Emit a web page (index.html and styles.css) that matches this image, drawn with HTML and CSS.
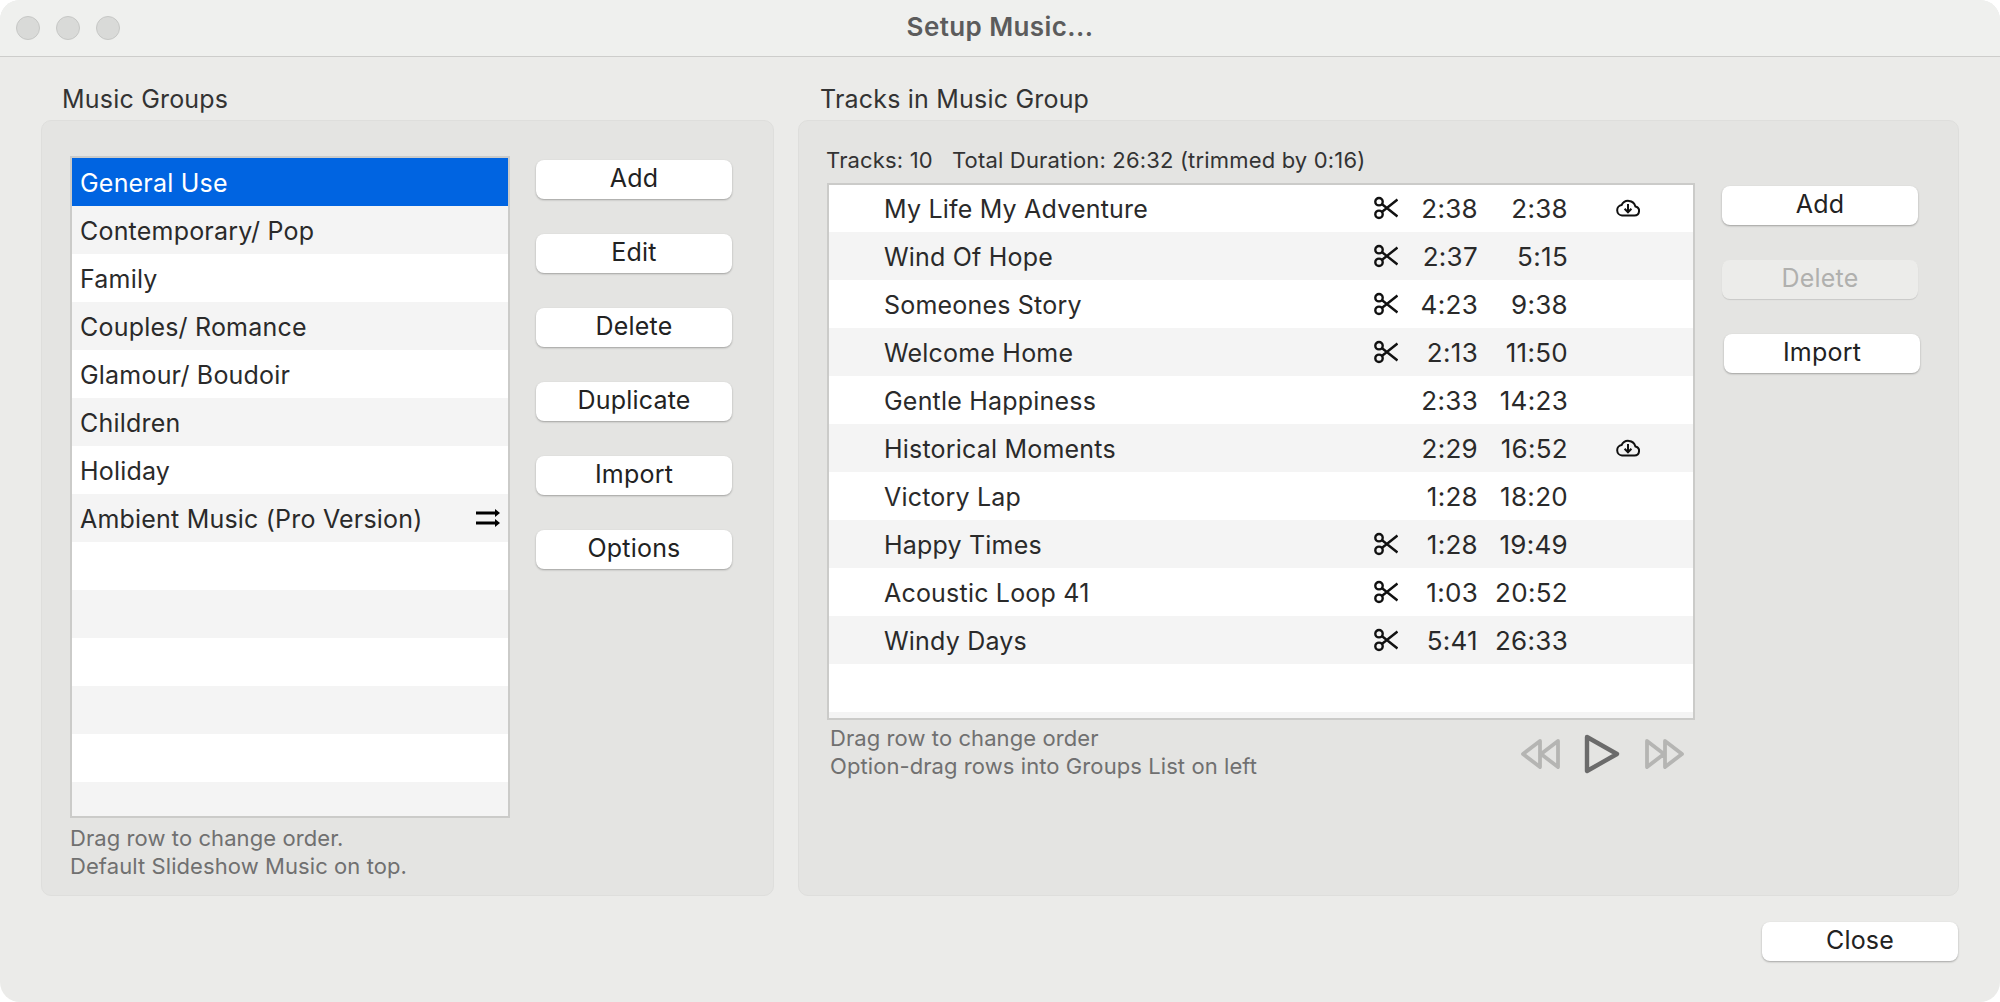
FILE: index.html
```html
<!doctype html>
<html lang="en">
<head>
	<meta charset="UTF-8">
	<title>Setup Music...</title>
	<link rel="stylesheet" href="styles.css">
</head>
<body>
<div class="window">
	<div class="titlebar">
		<div class="lights"><span></span><span></span><span></span></div>
		<div class="title">Setup Music...</div>
	</div>
	<div class="main">
		<section class="group group-left">
			<h2>Music Groups</h2>
			<div class="panel panel-left">
				<div class="list-col">
					<div class="list list-groups">
						<div class="row selected">General Use</div>
						<div class="row">Contemporary/ Pop</div>
						<div class="row">Family</div>
						<div class="row">Couples/ Romance</div>
						<div class="row">Glamour/ Boudoir</div>
						<div class="row">Children</div>
						<div class="row">Holiday</div>
						<div class="row">Ambient Music (Pro Version)
							<svg class="shuffle" viewBox="0 0 24 18"><path d="M0 4h20M0 14h20" stroke="#000" stroke-width="3"/><path d="M19 0l5 4-5 4zM19 10l5 4-5 4z" fill="#000"/></svg>
						</div>
						<div class="row"></div>
						<div class="row"></div>
						<div class="row"></div>
						<div class="row"></div>
						<div class="row"></div>
						<div class="row"></div>
					</div>
					<p class="hint">Drag row to change order.<br>Default Slideshow Music on top.</p>
				</div>
				<div class="buttons buttons-left">
					<button>Add</button>
					<button>Edit</button>
					<button>Delete</button>
					<button>Duplicate</button>
					<button>Import</button>
					<button>Options</button>
				</div>
			</div>
		</section>
		<section class="group group-right">
			<h2>Tracks in Music Group</h2>
			<div class="panel panel-right">
				<div class="tracks-col">
					<div class="summary">Tracks: 10 &nbsp; Total Duration: 26:32 (trimmed by 0:16)</div>
					<div class="list list-tracks">
						<div class="row track"><span class="name">My Life My Adventure</span><svg class="cut" viewBox="0 0 24 24"><use href="#scissors"/></svg><span class="time">2:38</span><span class="total">2:38</span><svg class="cloud" viewBox="0 0 24 18"><use href="#cloud"/></svg></div>
						<div class="row track"><span class="name">Wind Of Hope</span><svg class="cut" viewBox="0 0 24 24"><use href="#scissors"/></svg><span class="time">2:37</span><span class="total">5:15</span></div>
						<div class="row track"><span class="name">Someones Story</span><svg class="cut" viewBox="0 0 24 24"><use href="#scissors"/></svg><span class="time">4:23</span><span class="total">9:38</span></div>
						<div class="row track"><span class="name">Welcome Home</span><svg class="cut" viewBox="0 0 24 24"><use href="#scissors"/></svg><span class="time">2:13</span><span class="total">11:50</span></div>
						<div class="row track"><span class="name">Gentle Happiness</span><i class="cut"></i><span class="time">2:33</span><span class="total">14:23</span></div>
						<div class="row track"><span class="name">Historical Moments</span><i class="cut"></i><span class="time">2:29</span><span class="total">16:52</span><svg class="cloud" viewBox="0 0 24 18"><use href="#cloud"/></svg></div>
						<div class="row track"><span class="name">Victory Lap</span><i class="cut"></i><span class="time">1:28</span><span class="total">18:20</span></div>
						<div class="row track"><span class="name">Happy Times</span><svg class="cut" viewBox="0 0 24 24"><use href="#scissors"/></svg><span class="time">1:28</span><span class="total">19:49</span></div>
						<div class="row track"><span class="name">Acoustic Loop 41</span><svg class="cut" viewBox="0 0 24 24"><use href="#scissors"/></svg><span class="time">1:03</span><span class="total">20:52</span></div>
						<div class="row track"><span class="name">Windy Days</span><svg class="cut" viewBox="0 0 24 24"><use href="#scissors"/></svg><span class="time">5:41</span><span class="total">26:33</span></div>
						<div class="row"></div>
						<div class="row"></div>
					</div>
					<div class="below">
						<p class="hint">Drag row to change order<br>Option-drag rows into Groups List on left</p>
						<div class="transport">
							<svg class="skip" viewBox="0 0 40 32"><path d="M20 3L3 16l17 13zM38 3L21 16l17 13z" /></svg>
							<svg class="play" viewBox="0 0 36 40"><path d="M3 3L33 20 3 37z"/></svg>
							<svg class="skip last" viewBox="0 0 40 32"><path d="M2 3l17 13L2 29zM20 3l17 13-17 13z"/></svg>
						</div>
					</div>
				</div>
				<div class="buttons buttons-right">
					<button>Add</button>
					<button class="disabled">Delete</button>
					<button class="shifted">Import</button>
				</div>
			</div>
		</section>
	</div>
	<div class="footer"><button>Close</button></div>
</div>
<svg class="defs" width="0" height="0">
	<defs>
		<g id="scissors" fill="none" stroke="#111" stroke-width="2.4">
			<circle cx="5" cy="5.7" r="3.7"/>
			<circle cx="5" cy="18.3" r="3.7"/>
			<path d="M7.8 8L23.5 20.5M7.8 16L23.5 3.5"/>
		</g>
		<g id="cloud" fill="none" stroke="#111" stroke-width="2">
			<path d="M6 16.5H18.5a4.6 4.6 0 0 0 .9-9.1A7.4 7.4 0 0 0 5.6 6 5.3 5.3 0 0 0 6 16.5Z"/>
			<path d="M12 5v8M8.6 9.8L12 13.3l3.4-3.5"/>
		</g>
	</defs>
</svg>
</body>
</html>
```

FILE: styles.css
```css
html, body {
	margin: 0;
	height: 100%;
	background: #fff;
}
body {
	font-family: Inter, "Liberation Sans", sans-serif;
	font-size: 25px;
	letter-spacing: 0.2px;
	color: #2a2a2a;
}
.window {
	height: 1002px;
	display: flex;
	flex-direction: column;
	background: #ebebe9;
	border-radius: 20px;
	overflow: hidden;
}
.titlebar {
	height: 56px;
	flex: none;
	display: flex;
	align-items: center;
	justify-content: center;
	position: relative;
	background: #eff0ee;
	border-bottom: 1px solid #cdcdcb;
}
.lights {
	position: absolute;
	left: 16px;
	top: 16px;
	display: flex;
	gap: 16px;
}
.lights span {
	width: 24px;
	height: 24px;
	box-sizing: border-box;
	border-radius: 50%;
	background: #d9dad8;
	border: 1px solid #c6c7c5;
}
.title {
	padding-bottom: 4px;
	font-size: 26px;
	font-weight: 600;
	letter-spacing: 0.4px;
	color: #5c5c5c;
}
.main {
	display: flex;
	gap: 24px;
	padding: 0 40px 0 41px;
}
.group h2 {
	margin: 0;
	height: 63px;
	padding: 26px 0 0 21px;
	box-sizing: border-box;
	font-size: 25px;
	line-height: 32px;
	font-weight: 400;
	color: #333;
}
.group-left { width: 733px; }
.group-right { width: 1161px; }
.group-right h2 { padding-left: 22px; }
.panel {
	height: 776px;
	box-sizing: border-box;
	display: flex;
	background: #e4e4e2;
	border: 1px solid #dededc;
	border-radius: 10px;
}
.panel-left { padding: 35px 0 0 28px; }
.panel-right { padding: 0 0 0 28px; }
.list {
	box-sizing: border-box;
	background: #fff;
	border: 2px solid #cbcbc9;
	overflow: hidden;
}
.list-groups {
	width: 440px;
	height: 662px;
}
.list-tracks {
	width: 868px;
	height: 537px;
}
.row {
	height: 48px;
	box-sizing: border-box;
	flex: none;
	display: flex;
	align-items: center;
	padding: 2px 0 0 8px;
	white-space: nowrap;
}
.row:nth-child(even) { background: #f4f4f4; }
.row.selected {
	background: #0064e1;
	color: #fff;
}
.shuffle {
	width: 24px;
	height: 18px;
	margin: -2px 8px 0 auto;
}
.list-tracks .row:first-child {
	height: 47px;
	padding-top: 1px;
}
.track {
	padding-left: 55px;
}
.name { width: 490px; }
.cut {
	width: 24px;
	height: 24px;
	flex: none;
	margin-top: -2px;
}
.time, .total {
	padding-bottom: 2px;
	font-size: 26px;
	letter-spacing: 0.3px;
	text-align: right;
}
.time { width: 80px; }
.total { width: 90px; }
.cloud {
	width: 24px;
	height: 18px;
	margin: -2px 0 0 48px;
}
.hint {
	margin: 0;
	font-size: 22px;
	line-height: 28px;
	letter-spacing: 0.08px;
	color: #707070;
}
.list-col .hint { padding-top: 6px; }
.buttons {
	display: flex;
	flex-direction: column;
	align-items: flex-start;
}
button {
	width: 196px;
	height: 39px;
	padding: 0 0 4px;
	border: 0;
	border-radius: 8px;
	background: #fff;
	box-shadow: 0 1px 2px rgba(0, 0, 0, 0.3);
	font: inherit;
	letter-spacing: inherit;
	color: #222;
}
.buttons-left {
	gap: 35px;
	margin: 4px 0 0 26px;
}
.buttons-right {
	gap: 35px;
	margin: 65px 0 0 27px;
}
.disabled {
	background: #ececea;
	color: #b0b0ae;
	box-shadow: 0 1px 1px rgba(0, 0, 0, 0.12);
}
.shifted { margin-left: 2px; }
.summary {
	height: 62px;
	box-sizing: border-box;
	margin-left: -1px;
	padding-top: 25px;
	font-size: 22px;
	line-height: 28px;
	letter-spacing: 0.17px;
	color: #333;
}
.below {
	display: flex;
	width: 868px;
	padding-top: 4px;
}
.below .hint { padding-left: 3px; }
.transport {
	display: flex;
	align-items: center;
	gap: 24px;
	margin: 4px 10px 0 auto;
}
.transport svg {
	fill: none;
	stroke-width: 3.8;
	stroke-linejoin: round;
}
.transport .last { margin-left: 1px; }
.skip {
	width: 40px;
	height: 32px;
	stroke: #b5b5b3;
}
.transport .play {
	width: 36px;
	height: 40px;
	stroke: #6b6b6b;
	stroke-width: 4.4;
}
.footer {
	display: flex;
	justify-content: flex-end;
	padding: 26px 42px 0 0;
}
.defs { position: absolute; }
```
